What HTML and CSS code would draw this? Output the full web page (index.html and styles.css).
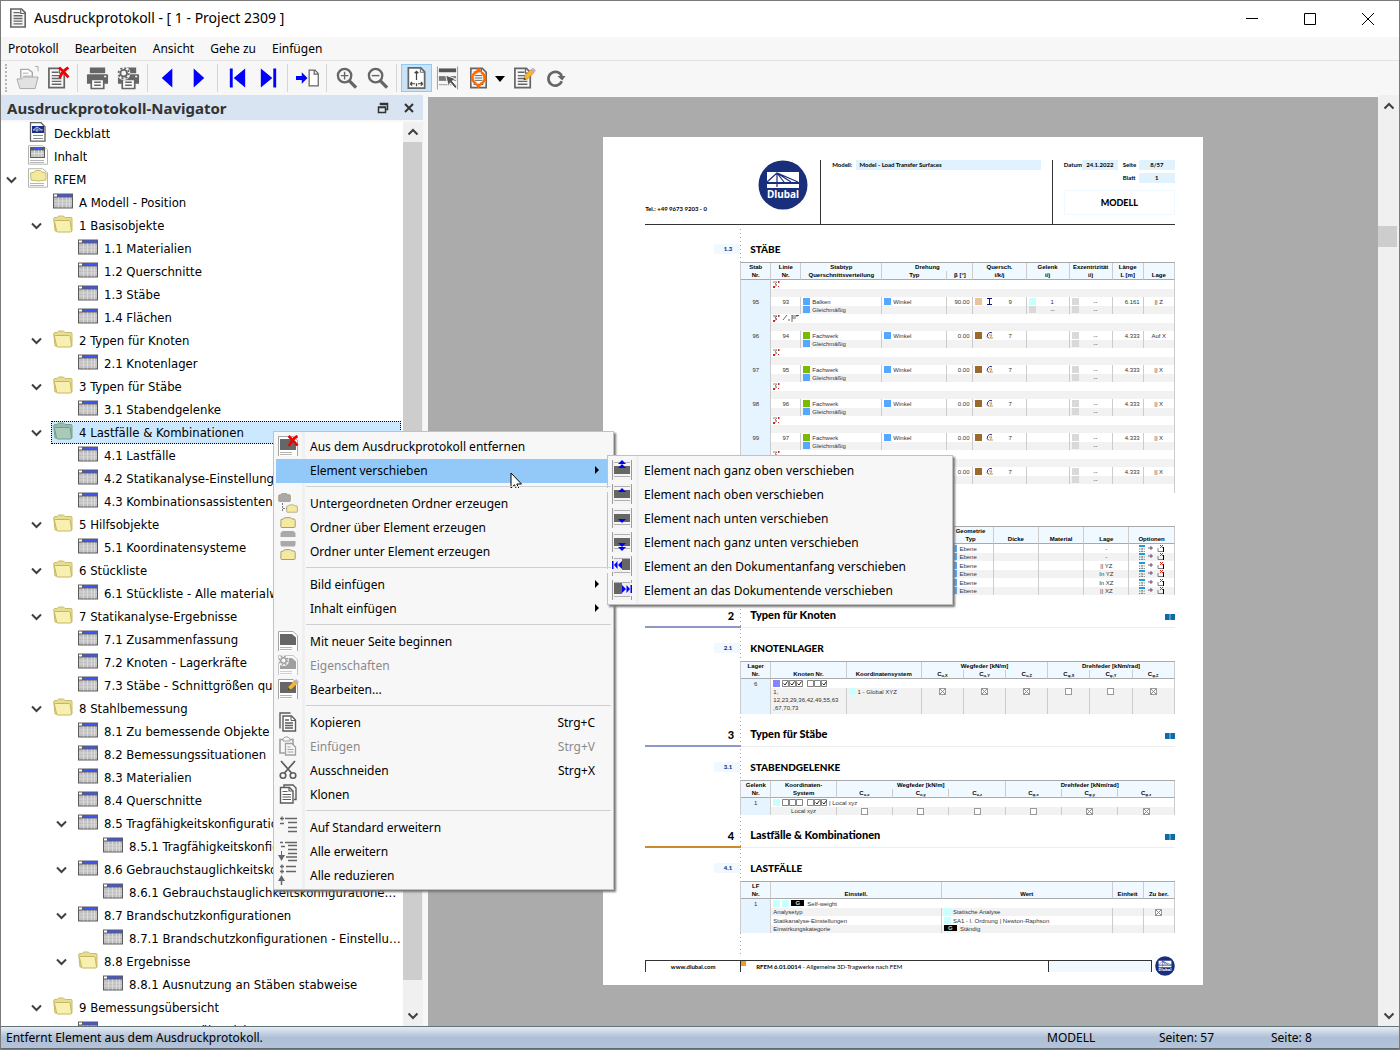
FILE: index.html
```
<!DOCTYPE html>
<html lang="de">
<head>
    <meta charset="UTF-8">
    <title>Ausdruckprotokoll - [ 1 - Project 2309 ]</title>
    <link rel="stylesheet" href="styles.css">
</head>
<body>
    <!-- icons -->
    <svg class="defs" aria-hidden="true">
        <symbol id="table" viewBox="0 0 20 15">
            <path d="M0 0h20v15H0z" fill="#5c5c5c"/><path d="M1 4h18v10H1z" fill="#bfbfbf"/>
            <path d="M1 1h3v2H1z" fill="#fff"/><path d="M5 1h14v2H5z" fill="#3f56f0"/>
            <path d="M1 7.500h18M1 10.500h18M5.500 4v10M9.500 4v10M13.500 4v10M16.500 4v10" stroke="#e2e2e2" stroke-width=".7"/>
        </symbol>
        <symbol id="folder" viewBox="0 0 20 18">
            <path d="M2 16 .7 4Q.7 2.800 2 2.500h2L5.500 1h5L12 2.500h6q1 0 1 1V16z" fill="#e8dc92" stroke="#c9bc68"/>
            <path d="M2.200 5.500h13.500q1.300 0 1.500 1l1.300 9.500q0 1-1 1H4.800q-1 0-1.200-1L1.500 6.500q-.2-1 .7-1z" fill="#f8f0b0" stroke="#c4b75e"/>
        </symbol>
        <symbol id="cover" viewBox="0 0 20 20">
            <path d="M2.500.7h10.500l4 4v14.500H2.500z" fill="#fff" stroke="#636363" stroke-width="1.300"/>
            <path d="M4 4h12v7H4z" fill="#1c2f86"/><path d="M5 8h10M9 5v5M5 8l4-3 5 3" stroke="#cfd6f2" stroke-width=".8" fill="none"/>
            <path d="M5 13.500h10M5 16.500h10" stroke="#8a8a8a"/>
        </symbol>
        <symbol id="content" viewBox="0 0 20 20">
            <path d="M.5.7h14l5 4v14.500H.500z" fill="#fff" stroke="#b5b5b5"/>
            <path d="M2 2h15v11H2z" fill="#5c5c5c"/><path d="M3 5.500h13V12H3z" fill="#c4c4c4"/><path d="M6 3h7v1.500H6z" fill="#3f56f0"/>
            <path d="M3 8.500h13M6.500 5v7M10.500 5v7M13.500 5v7" stroke="#e2e2e2" stroke-width=".7"/><path d="M2 15.500h14M2 17.500h14" stroke="#b5b5b5"/>
        </symbol>
        <symbol id="model" viewBox="0 0 20 20">
            <path d="M.5.7h14l5 4v14.500H.500z" fill="#fff" stroke="#b5b5b5"/>
            <path d="M3 12 2.500 5l4-1 1-1.500h5L14 4l4 1v7q-7 2-15 0z" fill="#f3e99e" stroke="#c9bc68"/>
            <path d="M2 15.500h14M2 17.500h14" stroke="#b5b5b5"/>
        </symbol>
        <symbol id="chev" viewBox="0 0 12 12"><path d="M1.500 3.500 6 8l4.500-4.500" fill="none" stroke="#404040" stroke-width="2"/></symbol>
        <symbol id="page" viewBox="0 0 20 24">
            <path d="M2 2h12l4 4v16H2z" fill="#f7f7f7" stroke="#666" stroke-width="1.800"/><path d="M13 2v5h5" fill="none" stroke="#666" stroke-width="1.300"/>
            <path d="M5 6h7M5 9.500h10M5 12.500h10M5 15.500h10M5 18.500h10" stroke="#666" stroke-width="1.500"/>
        </symbol>
        <symbol id="redx" viewBox="0 0 12 12"><path d="M1.500 1q4 3.500 9 9.500M10.500 1Q5 4 2 11" stroke="#f00000" stroke-width="2.600" fill="none"/></symbol>
        <symbol id="pencil" viewBox="0 0 12 12"><path d="m0 12 1-4 6-6 3 3-6 6z" fill="#f7b928" stroke="#9a7730" stroke-width=".5"/><path d="m7 2 2-2 3 3-2 2z" fill="#d2a7d6"/><path d="m0 12 .6-2.400 1.800 1.800z" fill="#333"/></symbol>
        <symbol id="printer" viewBox="0 0 24 24">
            <path d="M4 1h16v6H4z" fill="#666"/><path d="M1 9q0-1 1-1h20q1 0 1 1v9H1z" fill="#666"/>
            <path d="M5.500 13.500h13V23h-13z" fill="#fff" stroke="#666" stroke-width="1.800"/><path d="M8.500 16.500h7M8.500 19.500h7" stroke="#666" stroke-width="1.500"/><path d="M19 10.500h2" stroke="#fff" stroke-width="1.500"/>
        </symbol>
        <symbol id="gear" viewBox="0 0 12 12"><circle cx="6" cy="6" r="6" fill="#f7f7f7"/><circle cx="6" cy="6" r="3" fill="#f7f7f7" stroke="#666" stroke-width="1.700"/><circle cx="6" cy="6" r="4.600" fill="none" stroke="#666" stroke-width="1.600" stroke-dasharray="1.800 1.810"/></symbol>
        <symbol id="frame" viewBox="0 0 20 20">
            <path d="M.500 0v20M19.500 0v20" stroke="#9c9c9c"/><path d="M1 0h18v20H1z" fill="#f4f4f4"/><path d="M2 2.500h16M2 16.500h16" stroke="#b0b0b0"/><path d="M2 6h16v8H2z" fill="#666"/>
        </symbol>
        <symbol id="newpage" viewBox="0 0 20 20"><path d="M.500 20V.500H15l4.500 4V20" fill="#fff" stroke="#a5a5a5"/><path d="M2 3h12l4 3.500V14H2z" fill="#666"/><path d="M2 16.500h12M2 18.500h12" stroke="#b5b5b5"/></symbol>
        <symbol id="up" viewBox="0 0 8 4"><path d="M0 4 4 0l4 4z" fill="#00f"/></symbol>
        <symbol id="copy" viewBox="0 0 20 20"><path d="M2 16.500V1h10.500" fill="none" stroke="#5c5c5c" stroke-width="1.400"/><path d="M5 4h8.500L17.500 8v11H5z" fill="#fff" stroke="#5c5c5c" stroke-width="1.400"/><path d="M13 4v4.500h4" fill="none" stroke="#5c5c5c"/><path d="M7 8h4M7 11h8M7 13.500h8M7 16h8" stroke="#5c5c5c" stroke-width="1.300"/></symbol>
        <symbol id="clone" viewBox="0 0 20 20"><path d="M6 3V1h9l3 3v11.500h-2" fill="none" stroke="#5c5c5c" stroke-width="1.400"/><path d="M2.500 3.500h9L15 7v12H2.500z" fill="#fff" stroke="#5c5c5c" stroke-width="1.400"/><path d="M4.500 7.500h5M4.500 10.500H13M4.500 13H13M4.500 15.500H13M11 3.500V7h4" stroke="#5c5c5c" stroke-width="1.200" fill="none"/></symbol>
        <symbol id="paste" viewBox="0 0 20 20"><path d="M2 3.500h13V17H2z" fill="none" stroke="#a0a0a0" stroke-width="1.600"/><path d="M5 5V3l2-2h3l2 2v2z" fill="#f7f7f7" stroke="#a0a0a0"/><path d="M7.500 7.500H14l3.500 3.500v8h-10z" fill="#f7f7f7" stroke="#a0a0a0" stroke-width="1.300"/><path d="M9.500 11h3M9.500 13.500h6M9.500 16h6" stroke="#a0a0a0"/></symbol>
        <symbol id="cut" viewBox="0 0 20 20"><path d="m3 1 10.500 12M17 1 6.500 13" stroke="#5c5c5c" stroke-width="1.700"/><circle cx="5" cy="15.500" r="2.800" fill="none" stroke="#5c5c5c" stroke-width="1.600"/><circle cx="15" cy="15.500" r="2.800" fill="none" stroke="#5c5c5c" stroke-width="1.600"/></symbol>
        <symbol id="minifolder" viewBox="0 0 16 11"><path d="M1 2.500 3.500 2 4.500.7h6L12 2h2.500l.7 1.500V9.500q0 1-1 1H1.800q-1 0-1-1z" fill="currentColor" stroke="#9d9470" stroke-width=".9"/></symbol>
        <symbol id="right" viewBox="0 0 6 8"><path d="m1 0 4 4-4 4z" fill="#000"/></symbol>
        <symbol id="logo" viewBox="0 0 50 50">
            <circle cx="25" cy="25" r="24.500" fill="#1a2f7c"/><path d="M9 12h32v10H9zM9 24h32v4H9z" fill="#fff"/>
            <path d="M19 13v14M9 22 19 13l21 9M19 13l7 9M19 13l14 9" fill="none" stroke="#1a2f7c" stroke-width="1.200"/>
            <text x="25" y="38" text-anchor="middle" fill="#fff" font-family="Noto Sans, sans-serif" font-weight="700" font-size="10">Dlubal</text>
        </symbol>
        <symbol id="book" viewBox="0 0 10 6"><path d="M0 0h4.700v6H0zM5.300 0H10v6H5.300z" fill="#0c6ca6"/></symbol>
        <symbol id="mark" viewBox="0 0 7 7"><path d="M0 1h4L2 3l2 1-3 2" fill="none" stroke="#888"/><path d="M5 0h1.500v2H5zM0 5h2v2H0zM5 5h1v1H5z" fill="#d22"/></symbol>
        <symbol id="marks" viewBox="0 0 26 7"><path d="M0 1h4L2 3l2 1-3 2M10 5l4-5M15 5h2M19 1h6M19 3h4M19 0v7" fill="none" stroke="#666"/><path d="M5 0h1.500v2H5zM0 5h2v2H0zM23 0h3v1h-3z" fill="#d22"/></symbol>
        <symbol id="cs" viewBox="0 0 7 7"><path d="M6 .8A3 3 0 1 0 3 6.500" fill="none" stroke="#26268c"/><path d="M3 3h3L4 6h3" fill="none" stroke="#d29040"/></symbol>
        <symbol id="ibeam" viewBox="0 0 7 7"><path d="M1 .5h5M1 6.500h5M3.500.5v6" stroke="#14147c"/></symbol>
        <symbol id="opts" viewBox="0 0 26 7">
            <path d="M0 0h6v2H0z" fill="#1e9be0"/><path d="M0 4h6M0 6.500h6M3 3v4" stroke="#777" stroke-dasharray="1 .6"/>
            <path d="M9 3h5M12 1v4" stroke="#55679a"/><path d="M11 2.500h2v1h-2z" fill="#d44"/>
            <path d="M19 3v3.500h5" fill="none" stroke="#555b"/><path d="M24.500 2v5" stroke="#000"/><path d="m21 0 3 3M24 0l-3 3" stroke="#d22"/>
        </symbol>
        <symbol id="boxes" viewBox="0 0 45 7"><path d="M.500.500h6v6h-6zM7.500.500h6v6h-6zM14.500.500h6v6h-6zM25.500.500h6v6h-6zM32.500.500h6v6h-6zM39.500.500h5v6h-5z" fill="#fff" stroke="#666" stroke-width=".8"/></symbol>
        <symbol id="tick" viewBox="0 0 5 5"><path d="M.5 2.500 2 4 4.500.500" stroke="#222" fill="none"/></symbol>
    </svg>

    <div class="window">
        <header class="title-bar">
            <svg class="title-icon"><use href="#page"/></svg>
            <h1>Ausdruckprotokoll - [ 1 - Project 2309 ]</h1>
            <button aria-label="Minimieren"><svg viewBox="0 0 14 14"><path d="M1 6.500h12" stroke="#000"/></svg></button>
            <button aria-label="Maximieren"><svg viewBox="0 0 14 14"><path d="M1.500 1.500h11v11h-11z" stroke="#000" fill="none"/></svg></button>
            <button aria-label="Schließen"><svg viewBox="0 0 14 14"><path d="m1 1 12 12M13 1 1 13" stroke="#000"/></svg></button>
        </header>
        <nav class="menu-bar">
            <button>Protokoll</button><button>Bearbeiten</button><button>Ansicht</button><button>Gehe zu</button><button>Einfügen</button>
        </nav>
        <div class="toolbar">
            <span class="grip"></span>
            <button aria-label="Öffnen" disabled><svg viewBox="0 0 24 24"><path d="M5 12V3h8l4 3v6" fill="#fff" stroke="#a8a8a8" stroke-width="1.500"/><path d="M7 7h6M7 10h9M20 0h3v5" stroke="#a8a8a8" fill="none"/><path d="M1 13h5l2-2h15l-3 12H4z" fill="#e2e2e2" stroke="#a8a8a8"/></svg></button>
            <button aria-label="Protokoll löschen"><svg viewBox="0 0 24 24"><use href="#page" width="20" height="24"/><use href="#redx" x="11" width="13" height="13"/></svg></button>
            <span class="sep"></span>
            <button aria-label="Drucken"><svg viewBox="0 0 24 24"><use href="#printer"/></svg></button>
            <button aria-label="Druckeinstellungen"><svg viewBox="0 0 24 24"><use href="#printer"/><use href="#gear" width="14" height="14"/></svg></button>
            <span class="sep"></span>
            <button aria-label="Zurück"><svg viewBox="0 0 24 24"><path d="M17 2v20L6 12z" fill="#00f"/></svg></button>
            <button aria-label="Weiter"><svg viewBox="0 0 24 24"><path d="M7 2v20l11-10z" fill="#00f"/></svg></button>
            <span class="sep"></span>
            <button aria-label="Erste Seite"><svg viewBox="0 0 24 24"><path d="M4 2h3v20H4zM20 2v20L8 12z" fill="#00f"/></svg></button>
            <button aria-label="Letzte Seite"><svg viewBox="0 0 24 24"><path d="M17 2h3v20h-3zM4 2v20l12-10z" fill="#00f"/></svg></button>
            <span class="sep"></span>
            <button aria-label="Gehe zu Seite"><svg viewBox="0 0 24 24"><path d="M0 10h6V6l6 6-6 6v-4H0z" fill="#00f"/><path d="M13.700 3.700h6l3.500 3.500v13h-9.500zM19 4v4h4" fill="#fff" stroke="#666" stroke-width="1.300"/></svg></button>
            <span class="sep"></span>
            <button aria-label="Vergrößern"><svg viewBox="0 0 24 24"><circle cx="10" cy="9.500" r="7" fill="none" stroke="#666" stroke-width="2.400"/><path d="m15 15 7 7" stroke="#666" stroke-width="3.500"/><path d="M6 9.500h8M10 5.500v8" stroke="#666" stroke-width="1.500"/></svg></button>
            <button aria-label="Verkleinern"><svg viewBox="0 0 24 24"><circle cx="10" cy="9.500" r="7" fill="none" stroke="#666" stroke-width="2.400"/><path d="m15 15 7 7" stroke="#666" stroke-width="3.500"/><path d="M6 9.500h8" stroke="#666" stroke-width="1.500"/></svg></button>
            <span class="sep"></span>
            <button class="active" aria-label="Ganze Seite" aria-pressed="true"><svg viewBox="0 0 24 24"><path d="M3.500 1.500h13l4 4v17h-17z" fill="#fff" stroke="#666" stroke-width="1.800"/><path d="M16 2v4h4" fill="none" stroke="#666"/><path d="M12 5v9M10 7l2-2 2 2M5.500 18l2-2M5.500 18l2 2M5.500 18h5M18.500 18l-2-2M18.500 18l-2 2M18.500 18h-5M12 20.500v-3" fill="none" stroke="#444" stroke-width="1.300"/></svg></button>
            <button aria-label="Auswählen"><svg viewBox="0 0 24 24"><path d="M1.500 0v24M22.500 0v24" stroke="#999"/><path d="M3 2h18v4H3z" fill="#555"/><path d="M3 10h18v5H3z" fill="#777"/><path d="M3 19h18" stroke="#999"/><path d="m10 9 11 4-4 2 5 6-2 2-5-6-2 4z" fill="#555" stroke="#fff"/></svg></button>
            <button aria-label="Seitenränder"><svg viewBox="0 0 24 24"><use href="#page" x="2" width="20" height="24"/><path d="M5 6h14v12H5z" fill="#f7f7f7"/><path d="M8 9.500h8M8 12h8M8 14.500h8" stroke="#666"/><circle cx="12" cy="12" r="6.500" fill="none" stroke="#ff6a00" stroke-width="2.500" stroke-dasharray="6.200 4.010" stroke-dashoffset="-2"/><path d="m12 1 4 5H8zM12 23l4-5H8zM4 9h3v6H4zM20 9h-3v6h3z" fill="#ff6a00"/></svg></button>
            <button class="drop" aria-label="Weitere Optionen"><svg viewBox="0 0 10 6"><path d="M0 0h10L5 6z"/></svg></button>
            <button aria-label="Bearbeiten"><svg viewBox="0 0 24 24"><use href="#page" width="20" height="24"/><use href="#pencil" x="11" y="1" width="13" height="13"/></svg></button>
            <button aria-label="Aktualisieren"><svg viewBox="0 0 24 24"><path d="M18.500 15.500a7.200 7.200 0 1 1 0-5.500" fill="none" stroke="#666" stroke-width="2.800"/><path d="M14 10h8.500L19 14.500z" fill="#666"/></svg></button>
        </div>

        <main class="workspace">
            <aside class="navigator">
                <div class="panel-head">
                    <h2>Ausdruckprotokoll-Navigator</h2>
                    <button aria-label="Abdocken"><svg viewBox="0 0 12 12"><path d="M3.500 3V1.500h7v6H8.500M3 2.500h8" fill="none" stroke="#333" stroke-width="1.500"/><path d="M1.500 5h7v5.500h-7zM1 5.500h8" fill="none" stroke="#333" stroke-width="1.500"/></svg></button>
                    <button aria-label="Schließen"><svg viewBox="0 0 12 12"><path d="m2 2 8 8M10 2l-8 8" stroke="#333" stroke-width="2"/></svg></button>
                </div>
                <div class="panel-body">
                    <ul class="tree">
                        <li><div class="row"><span class="node"><svg><use href="#cover"/></svg><span>Deckblatt</span></span></div></li>
                        <li><div class="row"><span class="node"><svg><use href="#content"/></svg><span>Inhalt</span></span></div></li>
                        <li><div class="row open"><svg class="chev"><use href="#chev"/></svg><span class="node"><svg><use href="#model"/></svg><span>RFEM</span></span></div>
                        <ul>
                            <li><div class="row"><span class="node"><svg><use href="#table"/></svg><span>A Modell - Position</span></span></div></li>
                            <li><div class="row open"><svg class="chev"><use href="#chev"/></svg><span class="node"><svg><use href="#folder"/></svg><span>1 Basisobjekte</span></span></div>
                            <ul>
                                <li><div class="row"><span class="node"><svg><use href="#table"/></svg><span>1.1 Materialien</span></span></div></li>
                                <li><div class="row"><span class="node"><svg><use href="#table"/></svg><span>1.2 Querschnitte</span></span></div></li>
                                <li><div class="row"><span class="node"><svg><use href="#table"/></svg><span>1.3 Stäbe</span></span></div></li>
                                <li><div class="row"><span class="node"><svg><use href="#table"/></svg><span>1.4 Flächen</span></span></div></li>
                            </ul></li>
                            <li><div class="row open"><svg class="chev"><use href="#chev"/></svg><span class="node"><svg><use href="#folder"/></svg><span>2 Typen für Knoten</span></span></div>
                            <ul>
                                <li><div class="row"><span class="node"><svg><use href="#table"/></svg><span>2.1 Knotenlager</span></span></div></li>
                            </ul></li>
                            <li><div class="row open"><svg class="chev"><use href="#chev"/></svg><span class="node"><svg><use href="#folder"/></svg><span>3 Typen für Stäbe</span></span></div>
                            <ul>
                                <li><div class="row"><span class="node"><svg><use href="#table"/></svg><span>3.1 Stabendgelenke</span></span></div></li>
                            </ul></li>
                            <li><div class="row open"><svg class="chev"><use href="#chev"/></svg><span class="node selected"><svg><use href="#folder"/></svg><span>4 Lastfälle &amp; Kombinationen</span></span></div>
                            <ul>
                                <li><div class="row"><span class="node"><svg><use href="#table"/></svg><span>4.1 Lastfälle</span></span></div></li>
                                <li><div class="row"><span class="node"><svg><use href="#table"/></svg><span>4.2 Statikanalyse-Einstellungen</span></span></div></li>
                                <li><div class="row"><span class="node"><svg><use href="#table"/></svg><span>4.3 Kombinationsassistenten</span></span></div></li>
                            </ul></li>
                            <li><div class="row open"><svg class="chev"><use href="#chev"/></svg><span class="node"><svg><use href="#folder"/></svg><span>5 Hilfsobjekte</span></span></div>
                            <ul>
                                <li><div class="row"><span class="node"><svg><use href="#table"/></svg><span>5.1 Koordinatensysteme</span></span></div></li>
                            </ul></li>
                            <li><div class="row open"><svg class="chev"><use href="#chev"/></svg><span class="node"><svg><use href="#folder"/></svg><span>6 Stückliste</span></span></div>
                            <ul>
                                <li><div class="row"><span class="node"><svg><use href="#table"/></svg><span>6.1 Stückliste - Alle materialweise</span></span></div></li>
                            </ul></li>
                            <li><div class="row open"><svg class="chev"><use href="#chev"/></svg><span class="node"><svg><use href="#folder"/></svg><span>7 Statikanalyse-Ergebnisse</span></span></div>
                            <ul>
                                <li><div class="row"><span class="node"><svg><use href="#table"/></svg><span>7.1 Zusammenfassung</span></span></div></li>
                                <li><div class="row"><span class="node"><svg><use href="#table"/></svg><span>7.2 Knoten - Lagerkräfte</span></span></div></li>
                                <li><div class="row"><span class="node"><svg><use href="#table"/></svg><span>7.3 Stäbe - Schnittgrößen querschnittsweise</span></span></div></li>
                            </ul></li>
                            <li><div class="row open"><svg class="chev"><use href="#chev"/></svg><span class="node"><svg><use href="#folder"/></svg><span>8 Stahlbemessung</span></span></div>
                            <ul>
                                <li><div class="row"><span class="node"><svg><use href="#table"/></svg><span>8.1 Zu bemessende Objekte</span></span></div></li>
                                <li><div class="row"><span class="node"><svg><use href="#table"/></svg><span>8.2 Bemessungssituationen</span></span></div></li>
                                <li><div class="row"><span class="node"><svg><use href="#table"/></svg><span>8.3 Materialien</span></span></div></li>
                                <li><div class="row"><span class="node"><svg><use href="#table"/></svg><span>8.4 Querschnitte</span></span></div></li>
                                <li><div class="row open"><svg class="chev"><use href="#chev"/></svg><span class="node"><svg><use href="#table"/></svg><span>8.5 Tragfähigkeitskonfigurationen</span></span></div>
                                <ul>
                                    <li><div class="row"><span class="node"><svg><use href="#table"/></svg><span>8.5.1 Tragfähigkeitskonfigurationen - Einstellungen</span></span></div></li>
                                </ul></li>
                                <li><div class="row open"><svg class="chev"><use href="#chev"/></svg><span class="node"><svg><use href="#table"/></svg><span>8.6 Gebrauchstauglichkeitskonfigurationen</span></span></div>
                                <ul>
                                    <li><div class="row"><span class="node"><svg><use href="#table"/></svg><span>8.6.1 Gebrauchstauglichkeitskonfigurationen - Einstellungen</span></span></div></li>
                                </ul></li>
                                <li><div class="row open"><svg class="chev"><use href="#chev"/></svg><span class="node"><svg><use href="#table"/></svg><span>8.7 Brandschutzkonfigurationen</span></span></div>
                                <ul>
                                    <li><div class="row"><span class="node"><svg><use href="#table"/></svg><span>8.7.1 Brandschutzkonfigurationen - Einstellungen</span></span></div></li>
                                </ul></li>
                                <li><div class="row open"><svg class="chev"><use href="#chev"/></svg><span class="node"><svg><use href="#folder"/></svg><span>8.8 Ergebnisse</span></span></div>
                                <ul>
                                    <li><div class="row"><span class="node"><svg><use href="#table"/></svg><span>8.8.1 Ausnutzung an Stäben stabweise</span></span></div></li>
                                </ul></li>
                            </ul></li>
                            <li><div class="row open"><svg class="chev"><use href="#chev"/></svg><span class="node"><svg><use href="#folder"/></svg><span>9 Bemessungsübersicht</span></span></div>
                            <ul>
                                <li><div class="row"><span class="node"><svg><use href="#table"/></svg><span>9.1 Bemessungsübersicht</span></span></div></li>
                            </ul></li>
                        </ul></li>
                    </ul>
                    <div class="scrollbar">
                        <svg class="flip"><use href="#chev"/></svg>
                        <div class="track tree-track"><span class="thumb"></span></div>
                        <svg><use href="#chev"/></svg>
                    </div>
                </div>
            </aside>

            <section class="viewer">
                <article class="sheet">
                    <header class="sheet-head">
                        <div class="sender">
                            <span>Tel.: +49 9673 9203 - 0</span>
                            <svg class="logo"><use href="#logo"/></svg>
                        </div>
                        <div class="project"><span>Modell:</span><span class="field">Model - Load Transfer Surfaces</span></div>
                        <div class="meta">
                            <div class="meta-row"><span>Datum</span><span class="field">24.1.2022</span><span>Seite</span><span class="field">8/57</span></div>
                            <div class="meta-row"><span></span><span></span><span>Blatt</span><span class="field">1</span></div>
                            <strong>MODELL</strong>
                        </div>
                    </header>

                    <div class="sheet-body">
                        <h4><span>1.3</span>STÄBE</h4>
                        <table class="members">
                            <colgroup><col><col><col><col><col><col><col><col><col><col></colgroup>
                            <thead>
                                <tr><th>Stab</th><th>Linie</th><th>Stabtyp</th><th colspan="2">Drehung</th><th>Quersch.</th><th>Gelenk</th><th>Exzentrizität</th><th>Länge</th><th></th></tr>
                                <tr><th>Nr.</th><th>Nr.</th><th>Querschnittsverteilung</th><th>Typ</th><th>β [°]</th><th>i/k/j</th><th>i/j</th><th>i/j</th><th>L [m]</th><th>Lage</th></tr>
                            </thead>
                            <tbody>
                                <tr><td></td><td colspan="9"><svg class="mark"><use href="#mark"/></svg></td></tr>
                                <tr><td></td><td colspan="9"></td></tr>
                                <tr><td>95</td><td>93</td><td><i class="blue"></i>Balken</td><td><i class="blue"></i>Winkel</td><td>90.00</td><td><i class="tan"></i><svg class="cs"><use href="#ibeam"/></svg>9</td><td><i class="cyan"></i>1</td><td><i class="gray"></i>--</td><td>6.161</td><td>|| Z</td></tr>
                                <tr><td></td><td></td><td><i class="blue"></i>Gleichmäßig</td><td></td><td></td><td></td><td><i class="gray"></i>--</td><td><i class="gray"></i>--</td><td></td><td></td></tr>
                                <tr><td></td><td colspan="9"><svg class="marks"><use href="#marks"/></svg></td></tr>
                                <tr><td></td><td colspan="9"></td></tr>
                                <tr><td>96</td><td>94</td><td><i class="green"></i>Fachwerk</td><td><i class="blue"></i>Winkel</td><td>0.00</td><td><i class="brown"></i><svg class="cs"><use href="#cs"/></svg>7</td><td></td><td><i class="gray"></i>--</td><td>4.333</td><td>Auf X</td></tr>
                                <tr><td></td><td></td><td><i class="blue"></i>Gleichmäßig</td><td></td><td></td><td></td><td></td><td><i class="gray"></i>--</td><td></td><td></td></tr>
                                <tr><td></td><td colspan="9"><svg class="mark"><use href="#mark"/></svg></td></tr>
                                <tr><td></td><td colspan="9"></td></tr>
                                <tr><td>97</td><td>95</td><td><i class="green"></i>Fachwerk</td><td><i class="blue"></i>Winkel</td><td>0.00</td><td><i class="brown"></i><svg class="cs"><use href="#cs"/></svg>7</td><td></td><td><i class="gray"></i>--</td><td>4.333</td><td>|| X</td></tr>
                                <tr><td></td><td></td><td><i class="blue"></i>Gleichmäßig</td><td></td><td></td><td></td><td></td><td><i class="gray"></i>--</td><td></td><td></td></tr>
                                <tr><td></td><td colspan="9"><svg class="mark"><use href="#mark"/></svg></td></tr>
                                <tr><td></td><td colspan="9"></td></tr>
                                <tr><td>98</td><td>96</td><td><i class="green"></i>Fachwerk</td><td><i class="blue"></i>Winkel</td><td>0.00</td><td><i class="brown"></i><svg class="cs"><use href="#cs"/></svg>7</td><td></td><td><i class="gray"></i>--</td><td>4.333</td><td>|| X</td></tr>
                                <tr><td></td><td></td><td><i class="blue"></i>Gleichmäßig</td><td></td><td></td><td></td><td></td><td><i class="gray"></i>--</td><td></td><td></td></tr>
                                <tr><td></td><td colspan="9"><svg class="mark"><use href="#mark"/></svg></td></tr>
                                <tr><td></td><td colspan="9"></td></tr>
                                <tr><td>99</td><td>97</td><td><i class="green"></i>Fachwerk</td><td><i class="blue"></i>Winkel</td><td>0.00</td><td><i class="brown"></i><svg class="cs"><use href="#cs"/></svg>7</td><td></td><td><i class="gray"></i>--</td><td>4.333</td><td>|| X</td></tr>
                                <tr><td></td><td></td><td><i class="blue"></i>Gleichmäßig</td><td></td><td></td><td></td><td></td><td><i class="gray"></i>--</td><td></td><td></td></tr>
                                <tr><td></td><td colspan="9"><svg class="mark"><use href="#mark"/></svg></td></tr>
                                <tr><td></td><td colspan="9"></td></tr>
                                <tr><td></td><td></td><td></td><td></td><td>0.00</td><td><i class="brown"></i><svg class="cs"><use href="#cs"/></svg>7</td><td></td><td><i class="gray"></i>--</td><td>4.333</td><td>|| X</td></tr>
                                <tr><td></td><td></td><td></td><td></td><td></td><td></td><td></td><td><i class="gray"></i>--</td><td></td><td></td></tr>
                                <tr><td></td><td colspan="9"></td></tr>
                            </tbody>
                        </table>

                        <table class="surfaces">
                            <colgroup><col><col><col><col><col><col><col><col></colgroup>
                            <thead>
                                <tr><th></th><th></th><th></th><th>Geometrie</th><th></th><th></th><th></th><th></th></tr>
                                <tr><th></th><th></th><th></th><th>Typ</th><th>Dicke</th><th>Material</th><th>Lage</th><th>Optionen</th></tr>
                            </thead>
                            <tbody>
                                <tr><td></td><td></td><td></td><td><i class="blue"></i>Ebene</td><td></td><td></td><td>-</td><td><svg class="marks"><use href="#opts"/></svg></td></tr>
                                <tr><td></td><td></td><td></td><td><i class="blue"></i>Ebene</td><td></td><td></td><td>-</td><td><svg class="marks"><use href="#opts"/></svg></td></tr>
                                <tr><td></td><td></td><td></td><td><i class="blue"></i>Ebene</td><td></td><td></td><td>|| YZ</td><td><svg class="marks"><use href="#opts"/></svg></td></tr>
                                <tr><td></td><td></td><td></td><td><i class="blue"></i>Ebene</td><td></td><td></td><td>In YZ</td><td><svg class="marks"><use href="#opts"/></svg></td></tr>
                                <tr><td></td><td></td><td></td><td><i class="blue"></i>Ebene</td><td></td><td></td><td>In XZ</td><td><svg class="marks"><use href="#opts"/></svg></td></tr>
                                <tr><td></td><td></td><td></td><td><i class="blue"></i>Ebene</td><td></td><td></td><td>|| XZ</td><td><svg class="marks"><use href="#opts"/></svg></td></tr>
                            </tbody>
                        </table>

                        <h3><span>2</span>Typen für Knoten<svg><use href="#book"/></svg></h3>
                        <h4><span>2.1</span>KNOTENLAGER</h4>
                        <table class="supports">
                            <colgroup><col><col><col><col><col><col><col><col><col></colgroup>
                            <thead>
                                <tr><th>Lager</th><th></th><th></th><th colspan="3">Wegfeder [kN/m]</th><th colspan="3">Drehfeder [kNm/rad]</th></tr>
                                <tr><th>Nr.</th><th>Knoten Nr.</th><th>Koordinatensystem</th><th>C<small>u,X</small></th><th>C<small>u,Y</small></th><th>C<small>u,Z</small></th><th>C<small>φ,X</small></th><th>C<small>φ,Y</small></th><th>C<small>φ,Z</small></th></tr>
                            </thead>
                            <tbody>
                                <tr><td>6</td><td colspan="8"><i class="violet"></i><svg class="boxes"><use href="#boxes"/><use href="#tick" x="1" y="1" width="5" height="5"/><use href="#tick" x="8" y="1" width="5" height="5"/><use href="#tick" x="15" y="1" width="5" height="5"/><use href="#tick" x="40" y="1" width="5" height="5"/></svg></td></tr>
                                <tr class="tall"><td></td><td>1,<br>12,23,29,36,42,49,55,63<br>,67,70,73</td><td><i class="cyan"></i>1 - Global XYZ</td><td><input type="checkbox" aria-label="Cu,X" checked disabled></td><td><input type="checkbox" aria-label="Cu,Y" checked disabled></td><td><input type="checkbox" aria-label="Cu,Z" checked disabled></td><td><input type="checkbox" aria-label="Cφ,X" disabled></td><td><input type="checkbox" aria-label="Cφ,Y" disabled></td><td><input type="checkbox" aria-label="Cφ,Z" checked disabled></td></tr>
                            </tbody>
                        </table>

                        <h3><span>3</span>Typen für Stäbe<svg><use href="#book"/></svg></h3>
                        <h4><span>3.1</span>STABENDGELENKE</h4>
                        <table class="hinges">
                            <colgroup><col><col><col><col><col><col><col><col></colgroup>
                            <thead>
                                <tr><th>Gelenk</th><th>Koordinaten-</th><th colspan="3">Wegfeder [kN/m]</th><th colspan="3">Drehfeder [kNm/rad]</th></tr>
                                <tr><th>Nr.</th><th>System</th><th>C<small>u,x</small></th><th>C<small>u,y</small></th><th>C<small>u,z</small></th><th>C<small>φ,x</small></th><th>C<small>φ,y</small></th><th>C<small>φ,z</small></th></tr>
                            </thead>
                            <tbody>
                                <tr><td>1</td><td colspan="7"><i class="cyan"></i><svg class="boxes"><use href="#boxes"/><use href="#tick" x="33" y="1" width="5" height="5"/><use href="#tick" x="40" y="1" width="5" height="5"/></svg> | Local xyz</td></tr>
                                <tr><td></td><td>Local xyz</td><td><input type="checkbox" aria-label="Cu,x" disabled></td><td><input type="checkbox" aria-label="Cu,y" disabled></td><td><input type="checkbox" aria-label="Cu,z" disabled></td><td><input type="checkbox" aria-label="Cφ,x" disabled></td><td><input type="checkbox" aria-label="Cφ,y" checked disabled></td><td><input type="checkbox" aria-label="Cφ,z" checked disabled></td></tr>
                            </tbody>
                        </table>

                        <h3 class="current"><span>4</span>Lastfälle &amp; Kombinationen<svg><use href="#book"/></svg></h3>
                        <h4><span>4.1</span>LASTFÄLLE</h4>
                        <table class="cases">
                            <colgroup><col><col><col><col><col></colgroup>
                            <thead>
                                <tr><th>LF</th><th></th><th></th><th></th><th></th></tr>
                                <tr><th>Nr.</th><th>Einstell.</th><th>Wert</th><th>Einheit</th><th>Zu ber.</th></tr>
                            </thead>
                            <tbody>
                                <tr><td>1</td><td colspan="4"><i class="cyan"></i><i class="cyan"></i><b>G</b>Self-weight</td></tr>
                                <tr><td></td><td>Analysetyp</td><td><i class="cyan"></i>Statische Analyse</td><td></td><td><input type="checkbox" aria-label="Zu berechnen" checked disabled></td></tr>
                                <tr><td></td><td>Statikanalyse-Einstellungen</td><td><i class="cyan"></i>SA1 - I. Ordnung | Newton-Raphson</td><td></td><td></td></tr>
                                <tr><td></td><td>Einwirkungskategorie</td><td><b>G</b>Ständig</td><td></td><td></td></tr>
                            </tbody>
                        </table>
                    </div>

                    <footer class="sheet-foot">
                        <div class="foot-line">
                            <a href="#">www.dlubal.com</a>
                            <p><strong>RFEM 6.01.0014</strong> - Allgemeine 3D-Tragwerke nach FEM</p>
                            <span></span>
                        </div>
                        <svg><use href="#logo"/></svg>
                    </footer>
                </article>
            </section>
            <div class="scrollbar wide">
                <svg class="flip"><use href="#chev"/></svg>
                <div class="track doc-track"><span class="thumb"></span></div>
                <svg><use href="#chev"/></svg>
            </div>
        </main>

        <footer class="status-bar">
            <span>Entfernt Element aus dem Ausdruckprotokoll.</span>
            <span>MODELL</span><span>Seiten: 57</span><span>Seite: 8</span>
        </footer>

        <!-- context menu of the selected folder -->
        <ul class="menu context">
            <li><button><svg viewBox="0 0 20 20"><use href="#newpage"/><use href="#redx" x="9" y="-1" width="12" height="12"/></svg>Aus dem Ausdruckprotokoll entfernen</button></li>
            <li class="hover"><button><svg></svg>Element verschieben<svg class="arrow"><use href="#right"/></svg></button>
                <ul class="menu sub">
                    <li><button><svg viewBox="0 0 20 20"><use href="#frame"/><use href="#up" x="6" y="0" width="8" height="4"/><use href="#up" x="6" y="4" width="8" height="4"/></svg>Element nach ganz oben verschieben</button></li>
                    <li><button><svg viewBox="0 0 20 20"><use href="#frame"/><use href="#up" x="6" y="4" width="8" height="4"/></svg>Element nach oben verschieben</button></li>
                    <li><button><svg viewBox="0 0 20 20"><use href="#frame"/><path d="M6 11h8l-4 4z" fill="#00f"/></svg>Element nach unten verschieben</button></li>
                    <li><button><svg viewBox="0 0 20 20"><use href="#frame"/><path d="M6 11h8l-4 4zM6 15h8l-4 4z" fill="#00f"/></svg>Element nach ganz unten verschieben</button></li>
                    <li><button><svg viewBox="0 0 20 20"><use href="#frame"/><path d="M0 3h10v13H0z" fill="#eee"/><path d="M10 3h8v11h-8z" fill="#666"/><path d="M0 5h1.500v8H0zM5.500 5v8L2 9zM10 5v8L6 9z" fill="#00f"/></svg>Element an den Dokumentanfang verschieben</button></li>
                    <li><button><svg viewBox="0 0 20 20"><use href="#frame"/><path d="M10 3h10v13H10z" fill="#eee"/><path d="M2 3h8v11H2z" fill="#666"/><path d="M18.500 5H20v8h-1.500zM14.500 5v8L18 9zM10 5v8l4-4z" fill="#00f"/></svg>Element an das Dokumentende verschieben</button></li>
                </ul>
                <svg class="pointer" viewBox="0 0 12 19"><path d="M1 1v15l3.500-3.200 2.500 5.500 2.300-1-2.500-5.300H11.500z" fill="#fff" stroke="#000"/></svg>
            </li>
            <li class="line"></li>
            <li><button><svg class="grayfolder" viewBox="0 0 20 20"><use href="#minifolder" x="0" y="0" width="13" height="9"/><path d="M4.500 10v9M5 15.500h4" stroke="#777" stroke-dasharray="2 1"/><use class="yellow" href="#minifolder" x="8" y="11" width="12" height="9"/></svg>Untergeordneten Ordner erzeugen</button></li>
            <li><button><svg class="grayfolder" viewBox="0 0 20 20"><use class="yellow" href="#minifolder" x="2" y="0" width="16" height="11"/><path d="M2.500 20v-4l2-2h11l2 2v4z" fill="#a9a9a9"/></svg>Ordner über Element erzeugen</button></li>
            <li><button><svg class="grayfolder" viewBox="0 0 20 20"><use class="yellow" href="#minifolder" x="2" y="8" width="16" height="11"/><path d="M2.500 0v4l1 1.500h13l1-1.500V0z" fill="#a9a9a9"/></svg>Ordner unter Element erzeugen</button></li>
            <li class="line"></li>
            <li><button><svg></svg>Bild einfügen<svg class="arrow"><use href="#right"/></svg></button></li>
            <li><button><svg></svg>Inhalt einfügen<svg class="arrow"><use href="#right"/></svg></button></li>
            <li class="line"></li>
            <li><button><svg><use href="#newpage"/></svg>Mit neuer Seite beginnen</button></li>
            <li><button disabled><svg viewBox="0 0 20 20" class="faded"><use href="#newpage"/><use href="#gear" width="11" height="11"/></svg>Eigenschaften</button></li>
            <li><button><svg viewBox="0 0 20 20"><use href="#newpage"/><use href="#pencil" x="10" y="0" width="11" height="11"/></svg>Bearbeiten...</button></li>
            <li class="line"></li>
            <li><button><svg><use href="#copy"/></svg>Kopieren<kbd>Strg+C</kbd></button></li>
            <li><button disabled><svg><use href="#paste"/></svg>Einfügen<kbd>Strg+V</kbd></button></li>
            <li><button><svg><use href="#cut"/></svg>Ausschneiden<kbd>Strg+X</kbd></button></li>
            <li><button><svg><use href="#clone"/></svg>Klonen</button></li>
            <li class="line"></li>
            <li><button><svg viewBox="0 0 20 20"><path d="M7 1.500h12M10 5.500h9M10 10.500h9M10 14.500h9M2 1.500h4M4-.5v4M2 6.500h4" stroke="#666" stroke-width="1.300"/></svg>Auf Standard erweitern</button></li>
            <li><button><svg viewBox="0 0 20 20"><path d="M7 1.500h12M10 4.500h9M10 8.500h9M10 12.500h9M8 16h11M10 19.500h9M2 1.500h3M3 5.500h4" stroke="#666" stroke-width="1.300"/><path d="M3.500 10v7" stroke="#666"/><path d="M0 14h7l-3.500 6z" fill="#666"/></svg>Alle erweitern</button></li>
            <li><button><svg viewBox="0 0 20 20"><path d="M8 1.500h10M8 6.500h10M2 1.500h4M4-.5v4M2 6.500h4M4 4.500v4" stroke="#666" stroke-width="1.300"/><path d="M3.500 13v7" stroke="#666" stroke-width="1.500"/><path d="M0 16h7l-3.500-6z" fill="#666"/></svg>Alle reduzieren</button></li>
        </ul>
    </div>
</body>
</html>
```
FILE: styles.css
```
*{
    box-sizing: border-box;
}
body{
    margin: 0;
    font: 12px/18px "Noto Sans", sans-serif;
    color: #000;
}
h1, h2, h3, h4, p, ul{
    margin: 0;
    padding: 0;
    font-weight: normal;
}
ul{
    list-style: none;
}
button{
    font: inherit;
    color: inherit;
    background: none;
    border: 0;
    padding: 0;
}
svg{
    overflow: visible;
    flex: none;
}
.defs{
    position: absolute;
    width: 0;
    height: 0;
}

/* window */
.window{
    position: relative;
    display: flex;
    flex-direction: column;
    height: 100vh;
    border: 1px solid #7b7b7b;
    background: #f7f7f7;
    overflow: hidden;
}
.title-bar{
    display: flex;
    align-items: center;
    height: 36px;
    padding: 0 2px 2px 8px;
    background: #fff;
}
.title-icon{
    width: 18px;
    height: 22px;
}
.title-bar h1{
    flex: 1;
    margin-left: 7px;
    font-size: 14px;
}
.title-bar button{
    width: 58px;
    height: 34px;
}
.title-bar button svg{
    width: 14px;
    height: 14px;
    vertical-align: middle;
}
.menu-bar{
    display: flex;
    height: 23px;
}
.menu-bar button{
    padding: 0 8px;
}
.menu-bar button:first-child{
    padding-left: 7px;
}
.toolbar{
    display: flex;
    align-items: center;
    height: 35px;
    padding-left: 4px;
    border-top: 1px solid #e2e2e2;
}
.toolbar button{
    width: 31px;
    height: 28px;
    padding: 2px 3px;
}
.toolbar button svg{
    width: 23px;
    height: 24px;
}
.toolbar .active{
    background: #c9e4f9;
    box-shadow: inset 0 0 0 1px #90c8f6;
}
.toolbar .drop{
    width: 15px;
    padding: 0 3px 0 0;
}
.toolbar .drop svg{
    width: 10px;
    height: 6px;
    vertical-align: middle;
}
.grip{
    width: 7px;
    height: 28px;
    border-left: 2px dotted #b5b5b5;
}
.sep{
    width: 1px;
    height: 28px;
    margin: 0 4px 0 3px;
    background: #d5d5d5;
}

/* navigator */
.workspace{
    display: flex;
    flex: 1;
    min-height: 0;
}
.navigator{
    display: flex;
    flex-direction: column;
    width: 422px;
    margin-right: 5px;
}
.panel-head{
    display: flex;
    align-items: center;
    height: 25px;
    padding: 0 8px 0 6px;
    background: #d8e4f1;
    color: #333;
}
.panel-head h2{
    flex: 1;
    font-size: 15px;
    font-weight: bold;
}
.panel-head button{
    margin-left: 14px;
    height: 18px;
}
.panel-head svg{
    width: 12px;
    height: 12px;
    vertical-align: middle;
}
.panel-body{
    display: flex;
    flex: 1;
    min-height: 0;
    margin-top: 2px;
    background: #fff;
}
.tree{
    flex: 1;
    min-width: 0;
    overflow: hidden;
    font-family: "DejaVu Sans Condensed", "Noto Sans", sans-serif;
    font-size: 13px;
}
.tree ul{
    padding-left: 25px;
}
.row{
    display: flex;
    align-items: center;
    height: 23px;
    padding: 0 2px 0 25px;
}
.row.open{
    padding-left: 4px;
}
.chev{
    width: 13px;
    height: 12px;
    margin-right: 8px;
}
.node{
    display: flex;
    align-items: center;
    flex: 1;
    min-width: 0;
    height: 23px;
    padding-left: 2px;
}
.node svg{
    width: 20px;
    height: 20px;
    margin: 0 6px 3px 0;
}
.node span{
    overflow: hidden;
    white-space: nowrap;
    text-overflow: ellipsis;
}
.selected{
    background: #cce8ff;
    outline: 1px dotted #000;
    outline-offset: -1px;
}
.selected svg{
    filter: hue-rotate(80deg) saturate(.5) brightness(.82);
}
.scrollbar{
    display: flex;
    flex-direction: column;
    align-items: center;
    width: 20px;
    background: #f0f0f0;
}
.scrollbar svg{
    width: 12px;
    height: 12px;
    margin: 4px 0;
}
.scrollbar .flip{
    transform: scaleY(-1);
}
.scrollbar.wide{
    width: 21px;
    padding-top: 1px;
}
.track{
    display: flex;
    flex-direction: column;
    flex: 1;
    width: 100%;
}
.tree-track .thumb{
    height: 97%;
}
.doc-track{
    padding-top: 110px;
}
.doc-track .thumb{
    height: 21px;
}
.thumb{
    background: #cdcdcd;
    width: 19px;
}

/* print preview */
.viewer{
    display: flex;
    justify-content: center;
    flex: 1;
    min-width: 0;
    padding: 40px 0 41px;
    margin-top: 2px;
    background: #ababab;
}
.sheet{
    display: flex;
    flex-direction: column;
    min-width: 0;
    height: 100%;
    aspect-ratio: 210 / 297;
    padding: 23px 28px 8px 42px;
    background: #fff;
    font: 6px/8px "Liberation Sans", sans-serif;
}
.sheet-head{
    display: flex;
    height: 65px;
    margin-bottom: 4px;
    border-bottom: 1px solid #333;
    font: bold 6px/10px Lato, sans-serif;
}
.sender{
    display: flex;
    justify-content: space-between;
    flex: 0 0 176px;
    padding-right: 12px;
    border-right: 1px solid #333;
}
.sender span{
    padding-top: 44px;
}
.logo{
    width: 50px;
    height: 50px;
}
.project{
    display: flex;
    align-items: flex-start;
    flex: 1;
    padding: 0 11px;
    border-right: 1px solid #333;
}
.field{
    background: #dff2fd;
    text-align: center;
}
.project .field{
    flex: 1;
    margin-left: 4px;
    padding-left: 3px;
    text-align: left;
}
.meta{
    flex: 0 0 122px;
    padding-left: 11px;
}
.meta-row{
    display: grid;
    grid-template-columns: 18px 36px 21px 36px;
    margin-bottom: 3px;
}
.meta-row span:nth-child(3){
    padding-left: 5px;
}
.meta strong{
    display: block;
    margin-top: 7px;
    border: 1px solid #f0f9ff;
    font-size: 9px;
    font-weight: 900;
    line-height: 23px;
    text-align: center;
}
.sheet-body{
    flex: 1;
    background: repeating-linear-gradient(#aaa 0 1px, transparent 1px 4px) 95px 0 / 1px 100% no-repeat;
}
.sheet h3, .sheet h4{
    display: flex;
    align-items: center;
    font-family: Lato, sans-serif;
    font-weight: 900;
}
.sheet h3{
    height: 25px;
    margin-top: 8px;
    border-bottom: 1px solid #eee;
    font-size: 11px;
}
.sheet h3 span{
    flex: 0 0 96px;
    height: 25px;
    margin-right: 9px;
    padding-right: 7px;
    border-bottom: 2px solid #8d97c8;
    line-height: 25px;
    text-align: right;
}
.sheet h3.current span{
    border-color: #cc8a2a;
}
.sheet h3 svg{
    width: 10px;
    height: 6px;
    margin: 4px 0 0 auto;
}
.sheet h4{
    height: 12px;
    margin: 14px 0 7px;
    font-size: 10px;
}
.sheet h4 span{
    width: 26px;
    margin: 0 10px 0 69px;
    padding-right: 8px;
    background: #f0f9ff;
    color: #1c2f7c;
    font-size: 6px;
    line-height: 10px;
    text-align: right;
}

/* report tables */
.sheet table{
    width: calc(100% - 95px);
    margin-left: 95px;
    table-layout: fixed;
    border-spacing: 0;
    border-left: 1px solid #ccc;
    border-top: 1px solid #aaa;
}
.sheet .surfaces{
    margin-top: 33px;
}
.sheet th, .sheet td{
    height: 9px;
    padding: 0;
    border-right: 1px solid #ccc;
    text-align: center;
    line-height: 8px;
    white-space: nowrap;
}
.sheet th{
    background: #f0f9ff;
}
.sheet tr:first-child th{
    height: 8px;
}
.sheet tr:last-child th{
    border-bottom: 1px solid #aaa;
}
.sheet td{
    background: #fff;
    color: #333;
}
.sheet tr:nth-child(even) td{
    height: 8px;
    background: #f2f2f2;
}
.sheet tr td:first-child, .sheet tr:nth-child(even) td:first-child{
    background: #e5f4fe;
}
.sheet td[colspan], .surfaces td:nth-child(4), .supports td:nth-child(-n+3), .cases td:nth-child(-n+3),
.members td:nth-child(3), .members td:nth-child(4), .members td:nth-child(n+6):nth-child(-n+8){
    padding-left: 2px;
    text-align: left;
}
.sheet tr td:first-child{
    padding: 0;
    text-align: center;
}
.members td:nth-child(5), .members td:nth-child(9){
    padding-right: 3px;
    text-align: right;
}
.sheet .supports .tall td{
    height: 26px;
    vertical-align: top;
}
.members col:nth-child(-n+2){ width: 30px; }
.members col:nth-child(3){ width: 81px; }
.members col:nth-child(4){ width: 65px; }
.members col:nth-child(5){ width: 26px; }
.members col:nth-child(6){ width: 53px; }
.members col:nth-child(7), .members col:nth-child(8){ width: 43px; }
.members col:nth-child(n+9){ width: 31px; }
.surfaces col{ width: 45px; }
.surfaces col:nth-child(1){ width: 30px; }
.surfaces col:nth-child(2), .surfaces col:nth-child(3){ width: 88px; }
.supports col{ width: 42px; }
.supports col:nth-child(1){ width: 30px; }
.supports col:nth-child(2), .supports col:nth-child(3){ width: 75px; }
.hinges col{ width: 56px; }
.hinges col:nth-child(1){ width: 30px; }
.hinges col:nth-child(2){ width: 65px; }
.cases col{ width: 31px; }
.cases col:nth-child(1){ width: 30px; }
.cases col:nth-child(2), .cases col:nth-child(3){ width: 170px; }

.sheet i{
    display: inline-block;
    width: 7px;
    height: 7px;
    margin-right: 2px;
    vertical-align: top;
}
.members td:nth-child(n+6) i{
    margin-right: 4px;
}
.members td:nth-child(7) i, .members td:nth-child(8) i{
    margin-right: 15px;
}
.blue{ background: #55a8ff; }
.green{ background: #7aba00; }
.tan{ background: #eac29c; }
.brown{ background: #996a2c; }
.cyan{ background: #c8ffff; }
.gray{ background: #d9d9d9; }
.violet{ background: #8484ff; }
.sheet td svg{
    height: 7px;
    vertical-align: top;
}
.mark{
    width: 7px;
}
.marks{
    width: 26px;
}
.cs{
    width: 7px;
    margin-right: 15px;
}
.boxes{
    width: 45px;
}
.sheet b{
    display: inline-block;
    width: 13px;
    height: 6px;
    margin-right: 3px;
    background: #000;
    color: #ddd;
    line-height: 6px;
    text-align: center;
    vertical-align: top;
}
.sheet small{
    font-size: 4px;
    line-height: 0;
    vertical-align: -1px;
}
.sheet input{
    appearance: none;
    display: block;
    width: 7px;
    height: 7px;
    margin: 0 auto;
    border: 1px solid #999;
    background: #fff;
}
.sheet input:checked{
    background: linear-gradient(45deg, transparent 42%, #888 42% 58%, transparent 58%), linear-gradient(-45deg, #fff 42%, #888 42% 58%, #fff 58%);
}

.sheet-foot{
    display: flex;
    align-items: center;
    height: 22px;
}
.foot-line{
    display: flex;
    flex: 1;
    height: 12px;
    border: 1px solid #333;
    border-bottom: 0;
    font: 6px/11px Lato, sans-serif;
    font-weight: bold;
}
.foot-line a{
    flex: 0 0 95px;
    border-right: 1px solid #333;
    color: #000;
    text-align: center;
    text-decoration: none;
}
.foot-line p{
    flex: 1;
    padding-left: 15px;
    background: linear-gradient(#e8a024, #e8a024) 0 0 / 5px 5px no-repeat;
}
.foot-line span{
    flex: 0 0 103px;
    border-left: 1px solid #333;
    background: #f0f9ff;
}
.sheet-foot svg{
    width: 20px;
    height: 22px;
    margin-left: 3px;
}

/* status bar */
.status-bar{
    display: flex;
    height: 23px;
    padding-left: 5px;
    border-top: 1px solid #5f7578;
    border-bottom: 1px solid #5f6a70;
    background: linear-gradient(#e6ebf2, #aebfd6 50%, #b4c3d8);
    line-height: 22px;
}
.status-bar span{
    flex: 0 0 112px;
}
.status-bar span:first-child{
    flex: 1;
}
.status-bar span:last-child{
    flex-basis: 128px;
}

/* menus */
.menu{
    position: absolute;
    padding: 3px 2px 1px;
    border: 1px solid #c2c2c2;
    background: linear-gradient(90deg, transparent 28px, #f0f0f0 28px 31px, transparent 31px) #f7f7f7;
    box-shadow: 2px 2px 2px #777;
    white-space: nowrap;
}
.context{
    left: 272px;
    top: 430px;
    width: 341px;
}
.sub{
    left: calc(100% - 4px);
    top: -4px;
    width: 346px;
}
.menu li{
    position: relative;
}
.menu button{
    display: flex;
    align-items: center;
    width: 100%;
    height: 24px;
    padding-left: 2px;
    text-align: left;
}
.menu button svg{
    width: 20px;
    height: 20px;
    margin: 0 12px 3px 0;
}
.menu .hover > button{
    background: #92c9f9;
}
.menu .arrow{
    width: 6px;
    height: 8px;
    margin: 0 11px 2px auto;
}
.menu kbd{
    margin: 0 16px 0 auto;
    font: inherit;
}
.menu button:disabled{
    color: #8a8a8a;
}
.menu .line{
    height: 9px;
    margin-left: 30px;
    border-bottom: 4px solid #f7f7f7;
    background: linear-gradient(#d0d0d0, #d0d0d0) 0 3px / 100% 1px no-repeat;
}
.faded{
    opacity: .6;
}
.grayfolder{
    color: #a9a9a9;
}
.yellow{
    color: #f3e9a0;
}
.pointer{
    position: absolute;
    left: 234px;
    top: 13px;
    width: 12px;
    height: 19px;
}
```
